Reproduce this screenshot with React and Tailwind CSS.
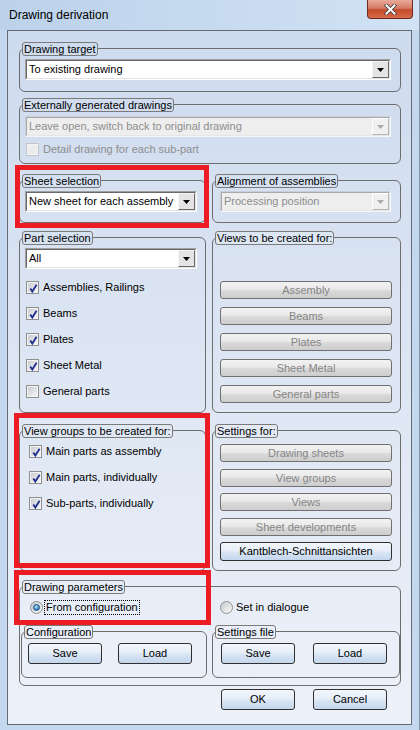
import React from "react";

const font = "font-['Liberation_Sans',Arial,sans-serif]";

function Label({ children, bg }) {
  return (
    <span
      className={`absolute left-[3px] top-0 flex h-[14px] items-center rounded-[3px] border border-[#7a7a7a] px-[1px] text-[11px] leading-none text-black ${bg}`}
    >
      {children}
    </span>
  );
}

function Group({ label, bg, className, inner, children }) {
  return (
    <div className={`relative pt-[6px] ${className}`}>
      <div className={`h-full rounded-[6px] border border-[#6e6e6e] ${inner}`}>{children}</div>
      <Label bg={bg}>{label}</Label>
    </div>
  );
}

function Arrow({ color }) {
  return (
    <svg width="7" height="4" viewBox="0 0 7 4">
      <path d="M0 0h7L3.5 4z" fill={color} />
    </svg>
  );
}

function Combo({ text, className, disabled }) {
  return (
    <div
      className={`flex h-[21px] border ${
        disabled
          ? "border-t-[#c9cfd8] border-l-[#c9cfd8] border-b-[#f4f6fa] border-r-[#f4f6fa]"
          : "border-t-[#a0a0a0] border-l-[#a0a0a0] border-b-white border-r-white"
      } ${className}`}
    >
      <div
        className={`flex flex-1 items-center border ${
          disabled
            ? "border-t-[#a9a9a9] border-l-[#a9a9a9] border-b-[#e6e6e6] border-r-[#e6e6e6] bg-[#eeeeee] text-[#8d8d8d]"
            : "border-t-[#696969] border-l-[#696969] border-b-[#e3e3e3] border-r-[#e3e3e3] bg-white text-black"
        }`}
      >
        <span className="flex-1 truncate pl-[2px] text-[11px] leading-none">{text}</span>
        <div
          className={`flex h-full w-[17px] items-center justify-center border ${
            disabled
              ? "border-t-white border-l-white border-b-[#b5b5b5] border-r-[#b5b5b5] bg-[#f0f0f0]"
              : "border-t-[#f4f4f4] border-l-[#f4f4f4] border-b-[#696969] border-r-[#696969] bg-[#e4e4e4]"
          }`}
        >
          <Arrow color={disabled ? "#a8a8a8" : "#000000"} />
        </div>
      </div>
    </div>
  );
}

function Check({ checked = true, disabled }) {
  return (
    <span
      className={`relative flex h-[13px] w-[13px] shrink-0 items-center justify-center border ${
        disabled ? "border-[#c2c6cc] bg-[#f4f4f4]" : "border-[#8e8f8f] bg-[#f4f4f4]"
      }`}
    >
      <span
        className={`h-[9px] w-[9px] ${
          disabled ? "bg-[#ececec]" : "bg-linear-to-br from-[#c9ccd1] to-[#f5f5f6]"
        }`}
      />
      {checked && (
        <svg className="absolute left-[1px] top-[1px]" width="11" height="11" viewBox="0 0 11 11">
          <path d="M2.3 5.6 L4.3 8.6 L8.6 1.8" fill="none" stroke="#1f2e8c" strokeWidth="1.8" />
        </svg>
      )}
    </span>
  );
}

function CheckRow({ children, className = "" }) {
  return (
    <div className={`flex h-[26px] items-center gap-[4px] ${className}`}>
      <Check />
      <span className="leading-none">{children}</span>
    </div>
  );
}

function Radio({ checked }) {
  return (
    <span className="flex h-[13px] w-[13px] shrink-0 items-center justify-center rounded-full border border-[#8e8f8f] bg-linear-to-br from-[#c6c9cd] to-[#fbfbfb]">
      {checked && (
        <span className="h-[7px] w-[7px] rounded-full border border-[#184a7c] bg-[radial-gradient(circle_at_40%_35%,#b5e3fb,#2a78bd_75%)]" />
      )}
    </span>
  );
}

function Btn({ children, className = "", disabled }) {
  return (
    <div
      className={`flex items-center justify-center rounded-[3px] border text-[11px] leading-none ${
        disabled
          ? "border-[#707070] bg-[linear-gradient(#f2f2f2,#e9e9e9_45%,#d9d9d9_55%,#cdcdcd)] text-[#858585]"
          : "border-[#2f2f2f] bg-[linear-gradient(#f3f7fc,#e6eef8_45%,#d8e5f4_55%,#c4d6ed)] text-black"
      } ${className}`}
    >
      {children}
    </div>
  );
}

export default function App() {
  return (
    <div
      className={`relative h-[730px] w-[420px] overflow-hidden border-r border-[#8796ab] bg-[#c3d7ee] text-[11px] text-black ${font}`}
    >
      {/* title bar */}
      <div className="flex h-[30px] items-start justify-between bg-linear-to-r from-[#bcd2eb] to-[#d1e2f4]">
        <span className="pl-[9px] pt-[8px] text-[12px] leading-[14px] text-black">Drawing derivation</span>
        <div className="mr-[6px] flex h-[19px] w-[46px] items-center justify-center rounded-b-[4px] border border-t-0 border-[#6f2a20] bg-[linear-gradient(#e9a99a,#d77a63_45%,#c54a2c_55%,#d86a4b)]">
          <svg width="13" height="11" viewBox="0 0 13 11">
            <path d="M2.5 1.5 L10.5 9.5 M10.5 1.5 L2.5 9.5" stroke="#3b3b3b" strokeWidth="3.6" strokeLinecap="square" />
            <path d="M2.5 1.5 L10.5 9.5 M10.5 1.5 L2.5 9.5" stroke="#ffffff" strokeWidth="2" strokeLinecap="square" />
          </svg>
        </div>
      </div>

      {/* client */}
      <div className="ml-[7px] h-[695px] w-[405px] border border-[#646b75] bg-linear-to-b from-[#cedbee] to-[#edf1f9] pl-[11px] pt-[11px]">
        <div className="flex w-[382px] flex-col">
          <Group label="Drawing target" bg="bg-[#cfdcee]" className="h-[50px]" inner="pl-[5px] pt-[10px]">
            <Combo text="To existing drawing" className="w-[366px]" />
          </Group>

          <Group
            label="Externally generated drawings"
            bg="bg-[#d1ddef]"
            className="mt-[6px] h-[66px]"
            inner="pl-[5px] pt-[11px]"
          >
            <Combo disabled text="Leave open, switch back to original drawing" className="w-[366px]" />
            <div className="mt-[6px] flex h-[13px] items-center gap-[4px] pl-[1px] text-[#8d8d8d]">
              <Check disabled checked={false} />
              <span className="leading-none">Detail drawing for each sub-part</span>
            </div>
          </Group>

          <div className="mt-[10px] flex h-[49px] gap-[6px]">
            <Group label="Sheet selection" bg="bg-[#d5e0f0]" className="h-[49px] w-[187px]" inner="pl-[5px] pt-[10px]">
              <Combo text="New sheet for each assembly" className="w-[172px]" />
            </Group>
            <Group
              label="Alignment of assemblies"
              bg="bg-[#d5e0f0]"
              className="h-[49px] w-[189px]"
              inner="pl-[7px] pt-[10px]"
            >
              <Combo disabled text="Processing position" className="w-[171px]" />
            </Group>
          </div>

          <div className="mt-[8px] flex h-[182px] gap-[6px]">
            <Group label="Part selection" bg="bg-[#d7e2f1]" className="h-[182px] w-[187px]" inner="pl-[5px] pt-[10px]">
              <Combo text="All" className="w-[172px]" />
              <div className="mt-[5px] flex flex-col pl-[1px]">
                <CheckRow>Assemblies, Railings</CheckRow>
                <CheckRow>Beams</CheckRow>
                <CheckRow>Plates</CheckRow>
                <CheckRow>Sheet Metal</CheckRow>
                <div className="flex h-[26px] items-center gap-[4px]">
                  <Check checked={false} />
                  <span className="leading-none">General parts</span>
                </div>
              </div>
            </Group>
            <Group
              label="Views to be created for:"
              bg="bg-[#dde6f3]"
              className="h-[182px] w-[189px]"
              inner="pl-[7px] pt-[43px]"
            >
              <div className="flex w-[172px] flex-col gap-[8px]">
                <Btn disabled className="h-[18px]">Assembly</Btn>
                <Btn disabled className="h-[18px]">Beams</Btn>
                <Btn disabled className="h-[18px]">Plates</Btn>
                <Btn disabled className="h-[18px]">Sheet Metal</Btn>
                <Btn disabled className="h-[18px]">General parts</Btn>
              </div>
            </Group>
          </div>

          <div className="mt-[11px] flex h-[147px] gap-[6px]">
            <Group
              label="View groups to be created for:"
              bg="bg-[#e0e8f4]"
              className="h-[147px] w-[187px]"
              inner="pl-[9px] pt-[7px]"
            >
              <CheckRow>Main parts as assembly</CheckRow>
              <CheckRow>Main parts, individually</CheckRow>
              <CheckRow>Sub-parts, individually</CheckRow>
            </Group>
            <Group label="Settings for:" bg="bg-[#e4eaf5]" className="h-[147px] w-[189px]" inner="pl-[7px] pt-[13px]">
              <div className="flex w-[172px] flex-col">
                <Btn disabled className="h-[18px]">Drawing sheets</Btn>
                <Btn disabled className="mt-[7px] h-[18px]">View groups</Btn>
                <Btn disabled className="mt-[6px] h-[18px]">Views</Btn>
                <Btn disabled className="mt-[7px] h-[18px]">Sheet developments</Btn>
                <Btn className="mt-[6px] h-[19px]">Kantblech-Schnittansichten</Btn>
              </div>
            </Group>
          </div>

          <Group
            label="Drawing parameters"
            bg="bg-[#e7edf7]"
            className="mt-[9px] h-[106px]"
            inner="pt-[12px]"
          >
            <div className="flex h-[16px] items-center">
              <div className="flex w-[200px] items-center pl-[10px]">
                <Radio checked />
                <span className="ml-[1px] border border-dotted border-black px-[1px] py-[1px] leading-none">
                  From configuration
                </span>
              </div>
              <div className="flex items-center gap-[3px]">
                <Radio />
                <span className="leading-none">Set in dialogue</span>
              </div>
            </div>
            <div className="mt-[10px] flex gap-[5px] pl-[1px]">
              <Group label="Configuration" bg="bg-[#e9eef8]" className="h-[53px] w-[186px]" inner="flex gap-[16px] pl-[6px] pt-[11px]">
                <Btn className="h-[21px] w-[74px]">Save</Btn>
                <Btn className="h-[21px] w-[74px]">Load</Btn>
              </Group>
              <Group label="Settings file" bg="bg-[#e9eef8]" className="h-[53px] w-[188px]" inner="flex gap-[18px] pl-[8px] pt-[11px]">
                <Btn className="h-[21px] w-[74px]">Save</Btn>
                <Btn className="h-[21px] w-[74px]">Load</Btn>
              </Group>
            </div>
          </Group>

          <div className="mt-[3px] flex gap-[18px] pl-[202px]">
            <Btn className="h-[21px] w-[74px]">OK</Btn>
            <Btn className="h-[21px] w-[74px]">Cancel</Btn>
          </div>
        </div>
      </div>

      {/* annotation rectangles */}
      <div className="absolute left-[15px] top-[165px] h-[63px] w-[194px] border-[5px] border-[#ed1c24]" />
      <div className="absolute left-[14px] top-[413px] h-[155px] w-[196px] border-[5px] border-[#ed1c24]" />
      <div className="absolute left-[14px] top-[570px] h-[55px] w-[197px] border-[5px] border-[#ed1c24]" />
    </div>
  );
}
